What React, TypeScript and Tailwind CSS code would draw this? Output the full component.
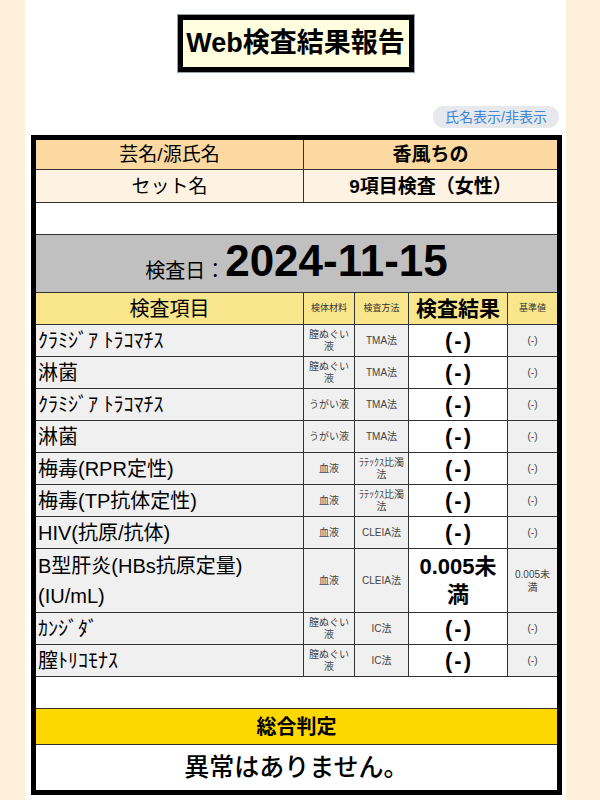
const rows = [
  { name: 'ｸﾗﾐｼﾞｱ ﾄﾗｺﾏﾁｽ', mat: '膣ぬぐい\n液', method: 'TMA法', result: '(-)', ref: '(-)' },
  { name: '淋菌', mat: '膣ぬぐい\n液', method: 'TMA法', result: '(-)', ref: '(-)' },
  { name: 'ｸﾗﾐｼﾞｱ ﾄﾗｺﾏﾁｽ', mat: 'うがい液', method: 'TMA法', result: '(-)', ref: '(-)' },
  { name: '淋菌', mat: 'うがい液', method: 'TMA法', result: '(-)', ref: '(-)' },
  { name: '梅毒(RPR定性)', mat: '血液', method: 'ﾗﾃｯｸｽ比濁\n法', result: '(-)', ref: '(-)' },
  { name: '梅毒(TP抗体定性)', mat: '血液', method: 'ﾗﾃｯｸｽ比濁\n法', result: '(-)', ref: '(-)' },
  { name: 'HIV(抗原/抗体)', mat: '血液', method: 'CLEIA法', result: '(-)', ref: '(-)' },
  { name: 'B型肝炎(HBs抗原定量)\n(IU/mL)', mat: '血液', method: 'CLEIA法', result: '0.005未\n満', ref: '0.005未\n満', tall: true },
  { name: 'ｶﾝｼﾞﾀﾞ', mat: '膣ぬぐい\n液', method: 'IC法', result: '(-)', ref: '(-)' },
  { name: '膣ﾄﾘｺﾓﾅｽ', mat: '膣ぬぐい\n液', method: 'IC法', result: '(-)', ref: '(-)' },
];

export default function App() {
  return (
    <div className="min-h-[800px] bg-[#fef0db] font-['Liberation_Sans','Noto_Sans_CJK_JP',sans-serif] text-black">
      <div className="ml-[25px] w-[541px] min-h-[800px] bg-white">
        <div className="flex justify-center pt-[15px]">
          <div className="flex h-[57px] w-[236px] items-center justify-center border-[5px] border-black bg-[#ffffe0] ring-1 ring-gray-400">
            <span className="whitespace-nowrap text-[27px] font-bold leading-none">Web検査結果報告</span>
          </div>
        </div>

        <div className="mt-[34px] flex justify-end pr-[7px]">
          <div className="flex h-[22px] w-[126px] items-center justify-center rounded-full bg-[#e6e8ec] text-[14px] leading-none text-[#3b86d8]">
            氏名表示/非表示
          </div>
        </div>

        <div className="ml-[6px] mt-[7px] w-[531px] border-[5px] border-black">
          <div className="flex h-[30px] border-b border-[#333] bg-[#fcd9a1] text-[19px] leading-none">
            <div className="flex w-[268px] items-center justify-center border-r border-[#333]">芸名/源氏名</div>
            <div className="flex flex-1 items-center justify-center font-bold">香風ちの</div>
          </div>
          <div className="flex h-[33px] border-b border-[#333] bg-[#fef3e3] text-[19px] leading-none">
            <div className="flex w-[268px] items-center justify-center border-r border-[#333]">セット名</div>
            <div className="flex flex-1 items-center justify-center font-bold">9項目検査（女性）</div>
          </div>
          <div className="h-[32px] border-b border-[#333] bg-white" />
          <div className="flex h-[58px] items-end justify-center border-b border-[#333] bg-[#c0c0c0] pb-[9px]">
            <span className="mb-[2px] text-[20px] leading-none">検査日：</span>
            <span className="text-[44px] font-bold leading-none">2024-11-15</span>
          </div>

          <div className="flex h-[32px] border-b border-[#333] bg-[#f9e68c] leading-none">
            <div className="flex w-[268px] items-center justify-center border-r border-[#333] text-[20px]">検査項目</div>
            <div className="flex w-[51px] items-center justify-center border-r border-[#333] text-[9px] text-[#333]">検体材料</div>
            <div className="flex w-[54px] items-center justify-center border-r border-[#333] text-[9px] text-[#333]">検査方法</div>
            <div className="flex w-[99px] items-center justify-center border-r border-[#333] text-[21px] font-bold">検査結果</div>
            <div className="flex flex-1 items-center justify-center text-[9px] text-[#333]">基準値</div>
          </div>

          {rows.map((r, i) => (
            <div
              key={i}
              className={r.tall ? 'flex h-[64px] border-b border-[#333]' : 'flex h-[32px] border-b border-[#333]'}
            >
              <div className="flex w-[268px] items-center whitespace-pre-line border-r border-[#333] bg-[#f0f0f0] pl-[2px] text-[20px] leading-[30px]">
                {r.name}
              </div>
              <div className="flex w-[51px] items-center justify-center whitespace-pre-line border-r border-[#333] bg-[#f0f0f0] text-center text-[10px] leading-[12px] text-[#444]">
                {r.mat}
              </div>
              <div className="flex w-[54px] items-center justify-center whitespace-pre-line border-r border-[#333] bg-[#f0f0f0] text-center text-[10px] leading-[12px] text-[#444]">
                {r.method}
              </div>
              <div
                className={
                  r.tall
                    ? 'flex w-[99px] items-center justify-center whitespace-pre-line border-r border-[#333] bg-white text-center text-[22px] font-bold leading-[28px]'
                    : 'flex w-[99px] items-center justify-center border-r border-[#333] bg-white pl-[2px] text-center text-[22px] font-bold leading-[28px] tracking-[2px]'
                }
              >
                {r.result}
              </div>
              <div className="flex flex-1 items-center justify-center whitespace-pre-line bg-[#f0f0f0] text-center text-[10px] leading-[13px] text-[#444]">
                {r.ref}
              </div>
            </div>
          ))}

          <div className="h-[32px] border-b border-[#333] bg-white" />
          <div className="flex h-[36px] items-center justify-center border-b border-[#333] bg-[#fdd700] text-[20px] font-bold leading-none">
            総合判定
          </div>
          <div className="flex h-[45px] items-center justify-center bg-white text-[25px] font-medium leading-none">
            異常はありません。
          </div>
        </div>
      </div>
    </div>
  );
}
